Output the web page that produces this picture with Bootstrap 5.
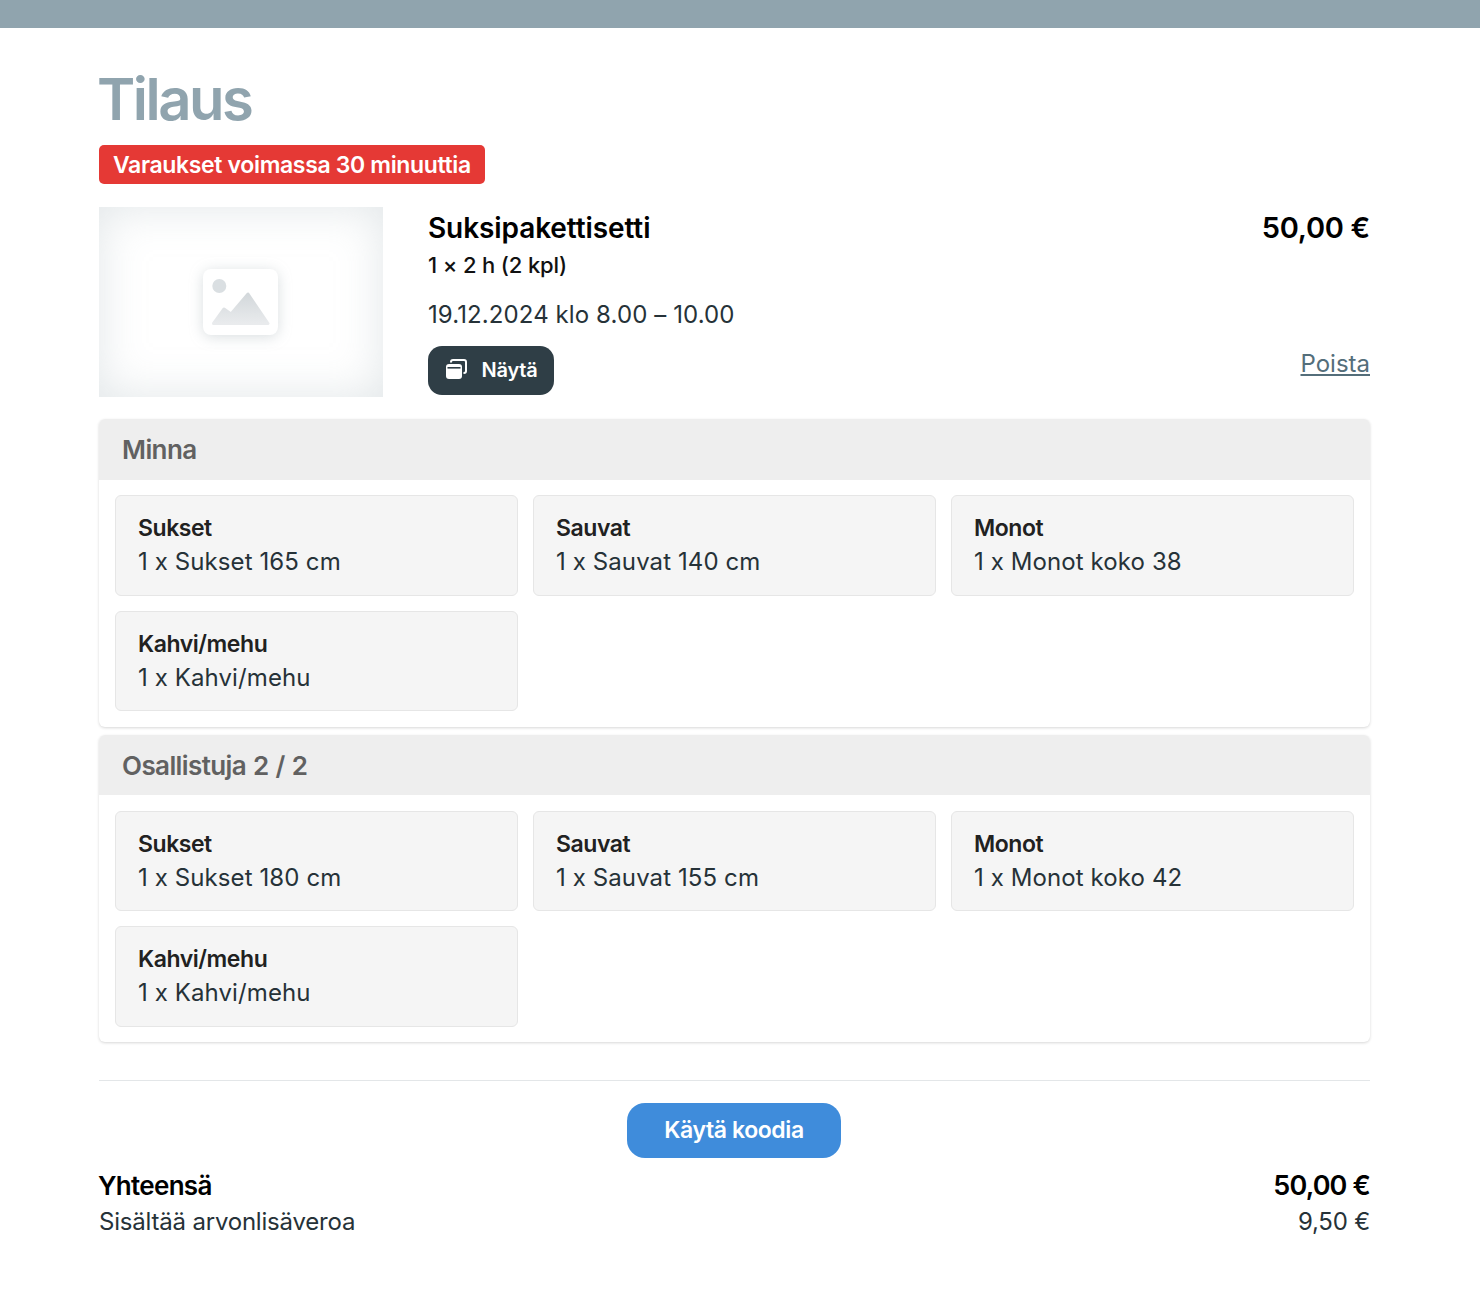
<!DOCTYPE html>
<html lang="fi">

<head>
    <meta charset="UTF-8">
    <meta name="viewport" content="width=device-width, initial-scale=1.0">
    <title>Tilaus</title>
    <link href="https://cdn.jsdelivr.net/npm/bootstrap@5.3.0/dist/css/bootstrap.min.css" rel="stylesheet">
    <style>
        body {
            font-family: Inter, "Noto Sans", "Liberation Sans", sans-serif;
            font-size: 24px;
            color: #263238;
            background: #fff;
        }

        .top-strip {
            height: 28px;
            background: #90a4ae;
        }

        .page-wrap {
            width: 1271px;
            margin-left: 99px;
        }

        .page-title {
            font-size: 58px;
            line-height: 70px;
            font-weight: 620;
            letter-spacing: -2.500px;
            color: #90a4ae;
            margin: 36px 0 11px -2px;
        }

        .notice {
            display: inline-block;
            height: 39px;
            line-height: 41px;
            padding: 0 14px;
            background: #e53935;
            color: #fff;
            border-radius: 5px;
            font-size: 23px;
            font-weight: 600;
            letter-spacing: -.35px;
        }

        .product {
            margin: 23px 0 22px;
            height: 190px;
            gap: 45px;
        }

        .thumb {
            width: 284px;
            height: 190px;
            flex: none;
            background: #fff;
            box-shadow: inset 0 0 45px rgba(175, 188, 195, .38);
        }

        .thumb svg {
            filter: drop-shadow(0 2px 7px rgba(120, 135, 145, .28));
        }

        .prod-name {
            font-size: 28px;
            line-height: 34px;
            font-weight: 600;
            letter-spacing: -.1px;
            color: #000;
            margin-top: 4px;
        }

        .prod-qty {
            font-size: 22px;
            line-height: 30px;
            font-weight: 500;
            letter-spacing: -.15px;
            color: #111;
            margin-top: 5px;
        }

        .prod-date {
            font-size: 24px;
            line-height: 30px;
            letter-spacing: .1px;
            margin-top: 20px;
        }

        .show-btn {
            height: 49px;
            width: 126px;
            margin-top: 16px;
            padding: 0 0 2px 1px;
            background: #2f3e46;
            border: 0;
            border-radius: 14px;
            color: #fff;
            font-size: 20px;
            font-weight: 600;
            letter-spacing: -.2px;
            gap: 13px;
        }

        .price {
            font-size: 29px;
            line-height: 34px;
            font-weight: 600;
            letter-spacing: -.3px;
            color: #000;
            margin-top: 4px;
        }

        .remove-link {
            font-size: 24px;
            line-height: 30px;
            color: #546e7a;
            margin-bottom: 18px;
        }

        .person {
            border: 0;
            border-radius: 6px;
            box-shadow: 0 1px 3px rgba(0, 0, 0, .16);
        }

        .person + .person {
            margin-top: 8px;
        }

        .person-head {
            height: 60.6px;
            padding: 0 23px;
            background: #eeeeee;
            border-radius: 6px 6px 0 0;
            font-size: 26px;
            line-height: 62px;
            font-weight: 600;
            letter-spacing: -.6px;
            word-spacing: 1px;
            color: #616161;
        }

        .person-body {
            display: grid;
            grid-template-columns: repeat(3, 403px);
            gap: 15px;
            padding: 15.4px 16px;
        }

        .rent-item {
            height: 100.6px;
            padding: 15px 22px 0;
            background: #f5f5f5;
            border: 1px solid #e6e6e6;
            border-radius: 6px;
            font-size: 24px;
            line-height: 34px;
            letter-spacing: .1px;
        }

        .rent-item b {
            display: block;
            font-size: 23px;
            font-weight: 600;
            letter-spacing: -.45px;
            color: #212121;
        }

        .divider {
            margin: 38px 0 22px;
            border-top: 1px solid #b0b8bc;
            opacity: .35;
        }

        .code-btn {
            display: block;
            width: 214px;
            height: 55px;
            margin-left: 528px;
            padding: 0;
            border: 0;
            border-radius: 18px;
            background: #3f8cdb;
            color: #fff;
            font-size: 23px;
            font-weight: 600;
            letter-spacing: -.4px;
        }

        .total-name {
            font-size: 26px;
            line-height: 34px;
            font-weight: 600;
            letter-spacing: -.7px;
            color: #000;
            margin-left: -1px;
        }

        .total-sum {
            font-size: 27px;
            line-height: 34px;
            font-weight: 600;
            letter-spacing: -.85px;
            color: #000;
        }

        .total-note {
            font-size: 24px;
            line-height: 38px;
            letter-spacing: -.2px;
        }

        .total-row {
            margin-top: 11px;
        }
    </style>
</head>

<body>
    <div class="top-strip"></div>

    <div class="page-wrap">
        <h1 class="page-title">Tilaus</h1>
        <span class="notice">Varaukset voimassa 30 minuuttia</span>

        <!-- tuote -->
        <div class="product d-flex">
            <div class="thumb d-flex align-items-center justify-content-center">
                <svg width="78" height="68" viewBox="0 0 78 68">
                    <defs>
                        <linearGradient id="hill" x1="0" y1="0" x2="0" y2="1">
                            <stop offset="0" stop-color="#d3d8db" />
                            <stop offset="1" stop-color="#e9ebed" />
                        </linearGradient>
                    </defs>
                    <rect x="1" y="1" width="75" height="66" rx="8" fill="#fff" />
                    <circle cx="17.3" cy="18" r="7" fill="#dadfe2" />
                    <path d="M11.5 55.5 22 41l7 5 17-20 20 29.500z" fill="url(#hill)" stroke="url(#hill)" stroke-width="3" stroke-linejoin="round" />
                </svg>
            </div>
            <div class="flex-grow-1 d-flex flex-column align-items-start">
                <div class="prod-name">Suksipakettisetti</div>
                <div class="prod-qty">1 × 2 h (2 kpl)</div>
                <div class="prod-date">19.12.2024 klo 8.00 – 10.00</div>
                <button type="button" class="btn show-btn d-flex align-items-center justify-content-center">
                    <svg width="23" height="21" viewBox="0 0 23 21">
                        <path d="M6 3.500V3a2 2 0 0 1 2-2h11a2 2 0 0 1 2 2v9a2 2 0 0 1-2 2h-.5" fill="none" stroke="#fff" stroke-width="2" />
                        <rect x="1" y="5" width="16" height="15" rx="3" fill="#fff" />
                        <rect x="2.500" y="8" width="13" height="1.600" fill="#2f3e46" />
                    </svg>
                    Näytä
                </button>
            </div>
            <div class="d-flex flex-column justify-content-between align-items-end">
                <div class="price">50,00 €</div>
                <a class="remove-link" href="#">Poista</a>
            </div>
        </div>

        <!-- osallistujat -->
        <div class="card person">
            <div class="person-head">Minna</div>
            <div class="person-body">
                <div class="rent-item"><b>Sukset</b>1 x Sukset 165 cm</div>
                <div class="rent-item"><b>Sauvat</b>1 x Sauvat 140 cm</div>
                <div class="rent-item"><b>Monot</b>1 x Monot koko 38</div>
                <div class="rent-item"><b>Kahvi/mehu</b>1 x Kahvi/mehu</div>
            </div>
        </div>

        <div class="card person">
            <div class="person-head">Osallistuja 2 / 2</div>
            <div class="person-body">
                <div class="rent-item"><b>Sukset</b>1 x Sukset 180 cm</div>
                <div class="rent-item"><b>Sauvat</b>1 x Sauvat 155 cm</div>
                <div class="rent-item"><b>Monot</b>1 x Monot koko 42</div>
                <div class="rent-item"><b>Kahvi/mehu</b>1 x Kahvi/mehu</div>
            </div>
        </div>

        <div class="divider"></div>
        <button type="button" class="btn code-btn">Käytä koodia</button>

        <div class="total-row d-flex justify-content-between">
            <div>
                <div class="total-name">Yhteensä</div>
                <div class="total-note">Sisältää arvonlisäveroa</div>
            </div>
            <div class="text-end">
                <div class="total-sum">50,00 €</div>
                <div class="total-note">9,50 €</div>
            </div>
        </div>
    </div>

    <script src="https://cdn.jsdelivr.net/npm/bootstrap@5.3.0/dist/js/bootstrap.bundle.min.js"></script>
</body>

</html>
